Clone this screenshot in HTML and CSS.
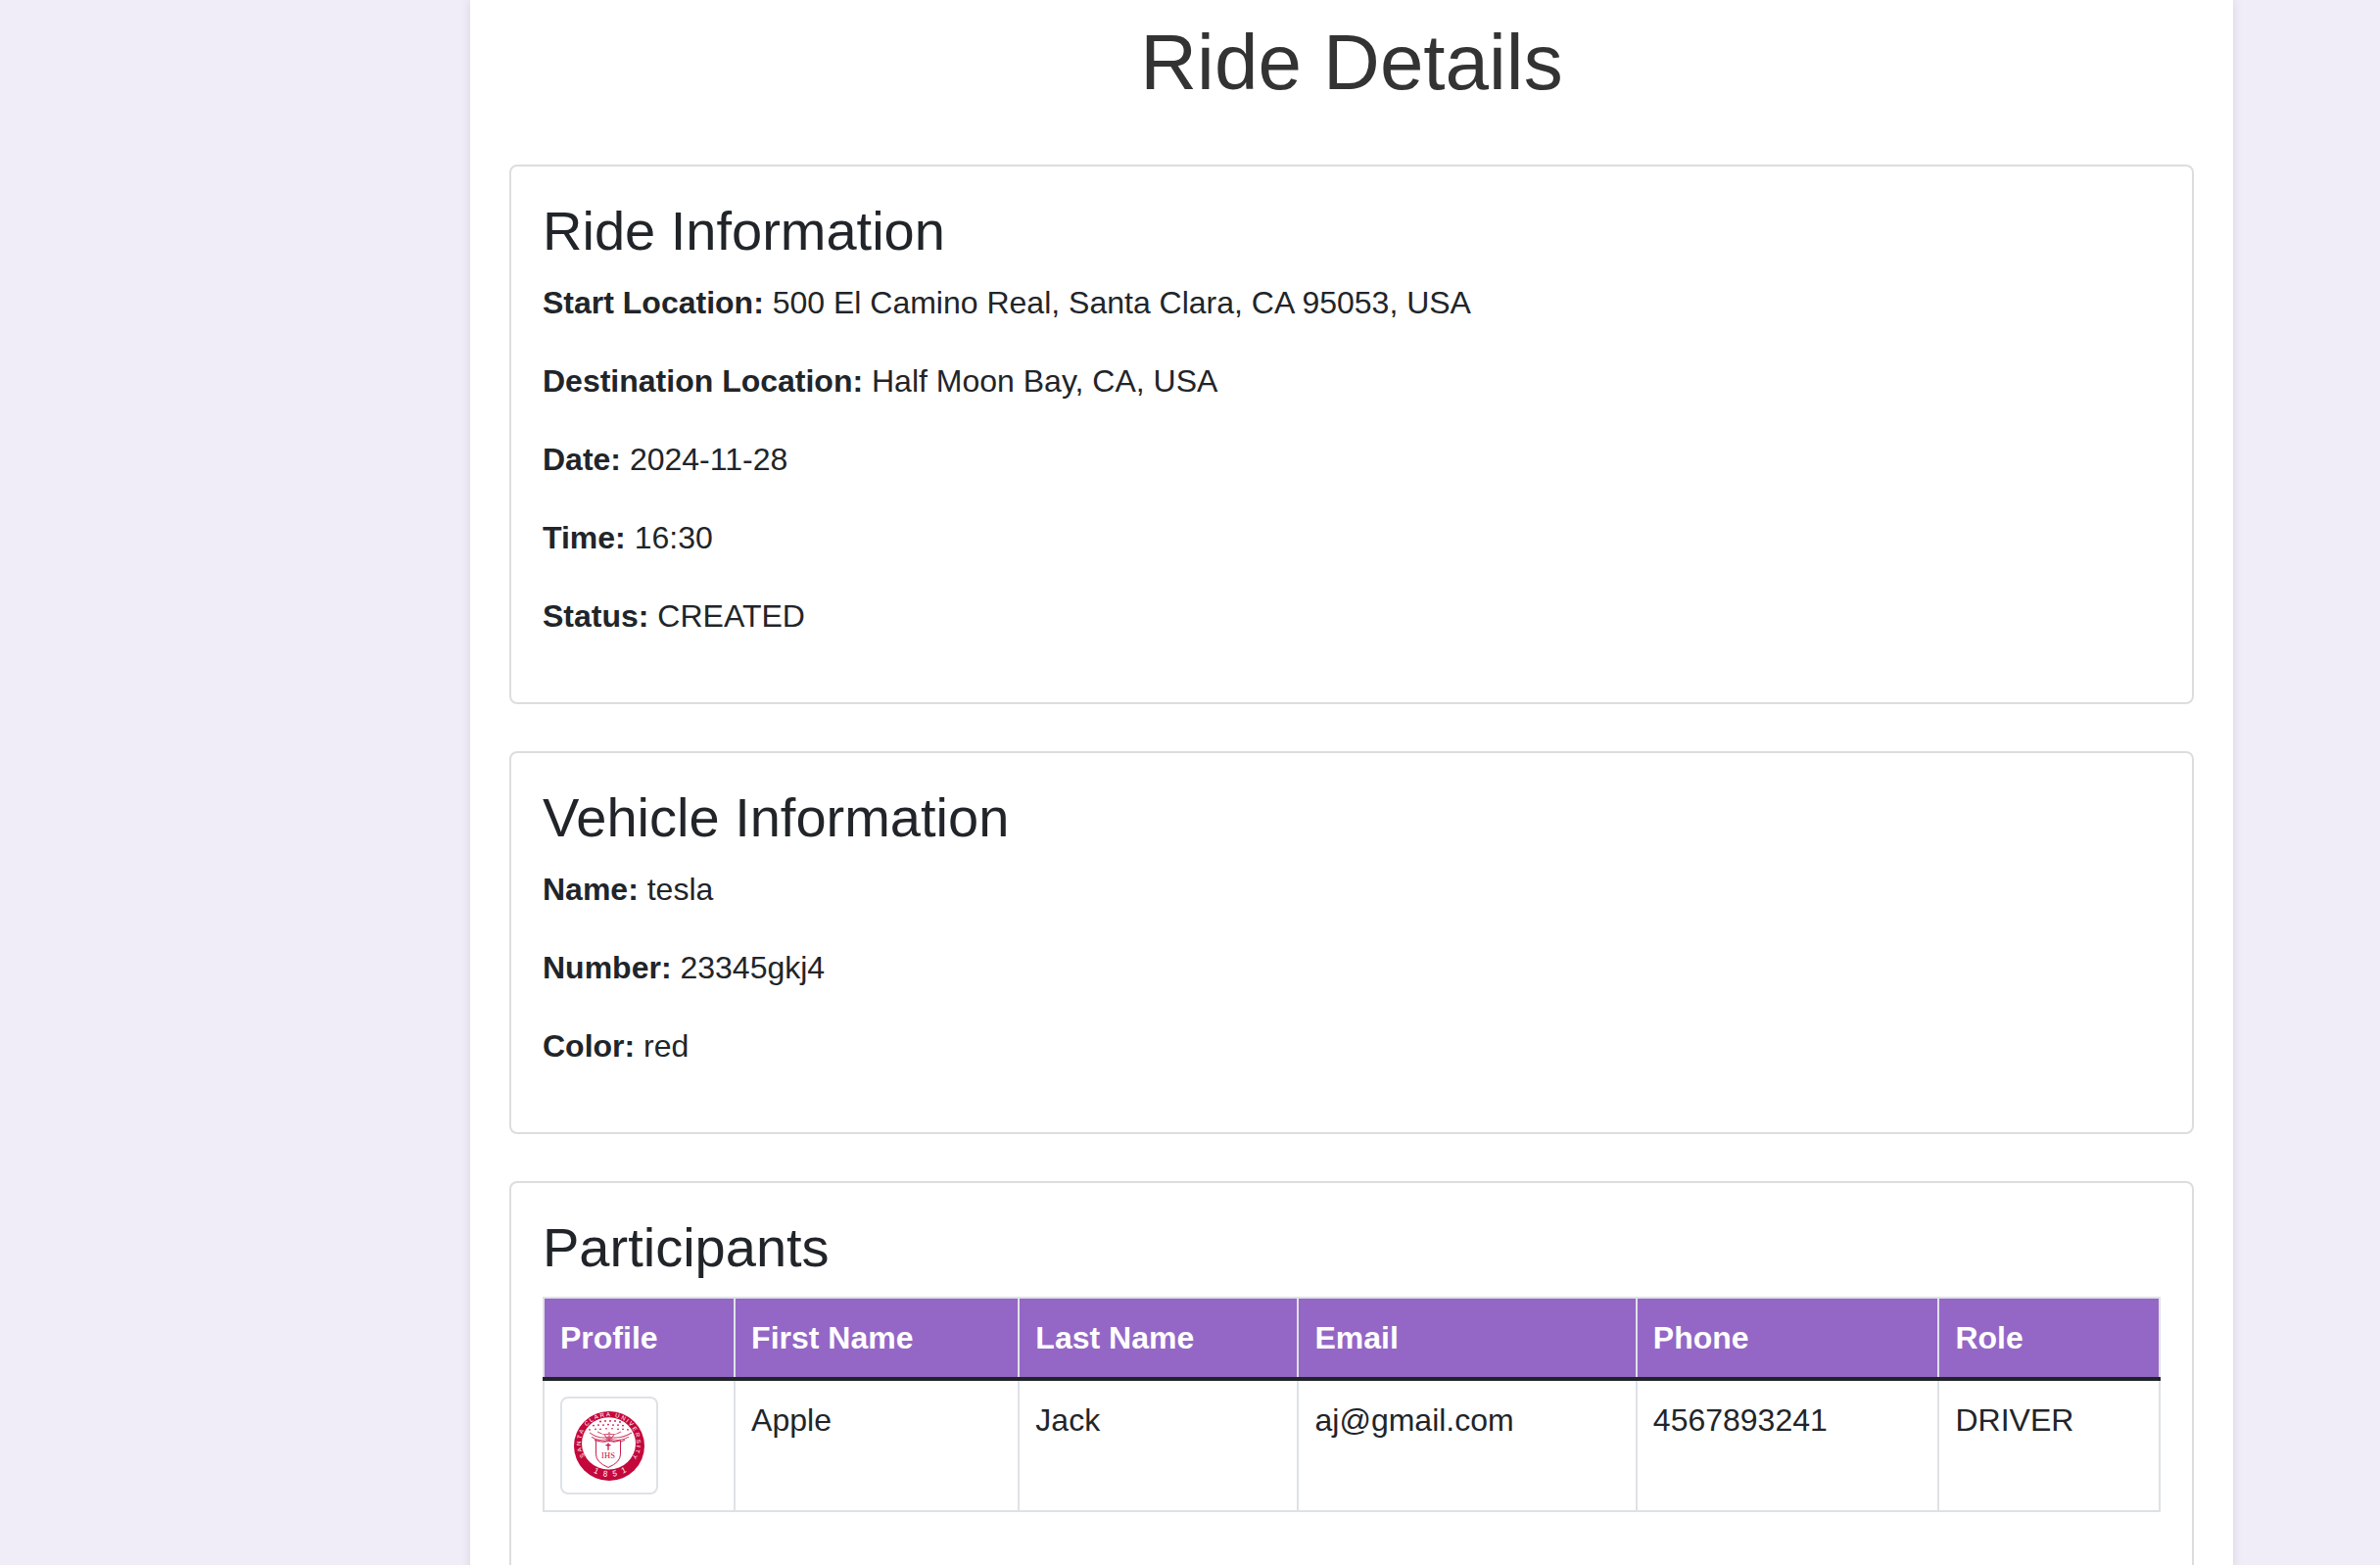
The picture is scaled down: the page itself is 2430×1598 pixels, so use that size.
FILE: index.html
```html
<!DOCTYPE html>
<html lang="en">
<head>
<meta charset="utf-8">
<title>Ride Details</title>
<link rel="stylesheet" href="styles.css">
</head>
<body>
<main class="container">
  <h1 class="page-title">Ride Details</h1>

  <section class="card">
    <h3 class="card-title">Ride Information</h3>
    <p><strong>Start Location:</strong> 500 El Camino Real, Santa Clara, CA 95053, USA</p>
    <p><strong>Destination Location:</strong> Half Moon Bay, CA, USA</p>
    <p><strong>Date:</strong> 2024-11-28</p>
    <p><strong>Time:</strong> 16:30</p>
    <p><strong>Status:</strong> CREATED</p>
  </section>

  <section class="card">
    <h3 class="card-title">Vehicle Information</h3>
    <p><strong>Name:</strong> tesla</p>
    <p><strong>Number:</strong> 23345gkj4</p>
    <p><strong>Color:</strong> red</p>
  </section>

  <section class="card card-last">
    <h3 class="card-title">Participants</h3>
    <table class="table">
      <thead>
        <tr><th>Profile</th><th>First Name</th><th>Last Name</th><th>Email</th><th>Phone</th><th>Role</th></tr>
      </thead>
      <tbody>
        <tr>
          <td>
            <div class="thumb">
              <svg class="seal" viewBox="0 0 72 68" width="72" height="71" preserveAspectRatio="none" role="img" aria-label="Santa Clara University seal">
                <defs>
                  <path id="arcTop" d="M11.5 45 A28.5 26 0 1 1 59.5 45"/>
                  <path id="arcBottom" d="M12 55 Q36 73 60 55"/>
                </defs>
                <ellipse cx="36" cy="34" rx="36" ry="34" fill="#c4083c"/>
                <ellipse cx="35.5" cy="31.5" rx="27.5" ry="25.5" fill="#fff"/>
                <text class="seal-ring"><textPath href="#arcTop" startOffset="1" textLength="114">SANTA CLARA UNIVERSITY</textPath></text>
                <text class="seal-year"><textPath href="#arcBottom" startOffset="9" textLength="36">1 8 5 1</textPath></text>
                <g fill="#c4083c">
                  <circle cx="27" cy="10" r="0.9"/><circle cx="32" cy="9.5" r="0.9"/><circle cx="37" cy="9.5" r="0.9"/><circle cx="42" cy="9.5" r="0.9"/><circle cx="47" cy="10.5" r="0.9"/>
                  <circle cx="20" cy="14" r="0.9"/><circle cx="25" cy="13.5" r="0.9"/><circle cx="30" cy="13.5" r="0.9"/><circle cx="35" cy="13" r="0.9"/><circle cx="40" cy="13.5" r="0.9"/><circle cx="45" cy="13.5" r="0.9"/><circle cx="50" cy="14" r="0.9"/>
                  <circle cx="16" cy="18" r="0.8"/><circle cx="22" cy="17.5" r="0.8"/><circle cx="27" cy="17.5" r="0.8"/><circle cx="33" cy="17" r="0.8"/><circle cx="39" cy="17" r="0.8"/><circle cx="45" cy="17.5" r="0.8"/><circle cx="50" cy="17.5" r="0.8"/><circle cx="55" cy="18" r="0.8"/>
                </g>
                <g class="seal-wings">
                  <path d="M36 25 Q26 28 16 21 M36 26 Q26 31 18 25 M36 27 Q28 33 21 28 M36 22 Q30 24 24 20"/>
                  <path d="M36 25 Q46 28 59 21 M36 26 Q46 31 56 25 M36 27 Q44 33 52 28 M36 22 Q42 24 48 20"/>
                  <path d="M36 20 V29 M31 23 L36 29 L41 23"/>
                </g>
                <path class="seal-shield" d="M22.5 28.5 Q30 31 35 29 Q41 31 47.5 28.5 V42 Q47.5 50 35 55 Q22.5 50 22.5 42Z"/>
                <path class="seal-cross" d="M35 31 V38 M32.5 33.2 H37.5"/>
                <text class="seal-ihs" x="35" y="46" text-anchor="middle" textLength="14">IHS</text>
              </svg>
            </div>
          </td>
          <td>Apple</td>
          <td>Jack</td>
          <td>aj@gmail.com</td>
          <td>4567893241</td>
          <td>DRIVER</td>
        </tr>
      </tbody>
    </table>
  </section>
</main>
</body>
</html>
```

FILE: styles.css
```css
* {
  box-sizing: border-box;
}

html,
body {
  margin: 0;
  height: 1598px;
  overflow: hidden;
}

body {
  background: #f0edf9;
  color: #212529;
  font-family: "Liberation Sans", Arial, sans-serif;
  font-size: 32px;
  line-height: 1.5;
}

.container {
  width: 1800px;
  margin-left: 480px;
  padding: 16px 40px 0;
  background: #fff;
  box-shadow: 0 0 10px rgba(0, 0, 0, 0.1);
  min-height: 1700px;
}

.page-title {
  margin: 0 0 56px;
  color: #333;
  font-size: 80px;
  font-weight: 400;
  line-height: 1.2;
  text-align: center;
}

.card {
  margin-bottom: 48px;
  padding: 32px;
  border: 2px solid #ddd;
  border-radius: 8px;
}

.card-last {
  min-height: 500px;
}

.card-title {
  margin: 0 0 16px;
  font-size: 56px;
  font-weight: 400;
  line-height: 1.2;
}

p {
  margin: 0 0 32px;
}

.table {
  width: 100%;
  border-collapse: collapse;
}

.table th,
.table td {
  padding: 16px;
  border: 2px solid #dee2e6;
  text-align: left;
  vertical-align: top;
}

.table th {
  background: #9467c6;
  color: #fff;
  font-weight: 700;
  border-bottom: 4px solid #212529;
}

.thumb {
  display: flex;
  align-items: center;
  justify-content: center;
  width: 100px;
  height: 100px;
  padding-top: 2px;
  border: 2px solid #dee2e6;
  border-radius: 8px;
  background: #fff;
}

.seal {
  display: block;
}

.seal-ring {
  fill: #fff;
  font-family: "Liberation Sans", sans-serif;
  font-size: 6px;
}

.seal-year {
  fill: #fff;
  font-family: "Liberation Sans", sans-serif;
  font-size: 8px;
}

.seal-ihs {
  fill: #c4083c;
  font-family: "Liberation Serif", serif;
  font-size: 8.5px;
}

.seal-wings {
  fill: none;
  stroke: #c4083c;
  stroke-width: 1;
  opacity: 0.75;
}

.seal-shield {
  fill: #fff;
  stroke: #c4083c;
  stroke-width: 0.9;
}

.seal-cross {
  fill: none;
  stroke: #c4083c;
  stroke-width: 1.2;
}
```
